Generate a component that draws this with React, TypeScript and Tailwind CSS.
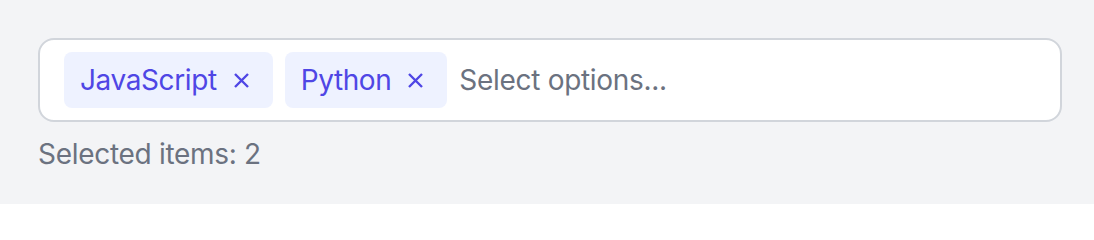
import React from "react";

function X() {
  return (
    <svg width="15" height="15" viewBox="0 0 15 15" fill="none" stroke="currentColor" strokeWidth="2.4" strokeLinecap="butt">
      <path d="M1 1L14 14M14 1L1 14" />
    </svg>
  );
}

function Chip({ label }: { label: string }) {
  return (
    <div className="flex items-center h-[56px] rounded-[8px] bg-[#eef2ff] pl-[16px] pr-[24px] text-[#4f46e5] text-[28px] leading-[40px] tracking-[-0.4px]">
      <span>{label}</span>
      <span className="ml-[17px] flex items-center"><X /></span>
    </div>
  );
}

export default function App() {
  return (
    <div className="w-[1094px] h-[204px] bg-[#f3f4f6] pt-[38px] pl-[38px]" style={{ fontFamily: "Inter, 'Noto Sans', sans-serif" }}>
      <div className="w-[1024px] h-[84px] rounded-[16px] border-2 border-[#d1d5db] bg-white px-[24px] py-[12px] flex items-center gap-[12px]">
        <Chip label="JavaScript" />
        <Chip label="Python" />
        <span className="text-[28px] leading-[40px] text-[#6b7280] tracking-[-0.3px]">Select options...</span>
      </div>
      <div className="mt-[12px] text-[28px] leading-[40px] text-[#6b7280] tracking-[-0.3px]">Selected items: 2</div>
    </div>
  );
}
